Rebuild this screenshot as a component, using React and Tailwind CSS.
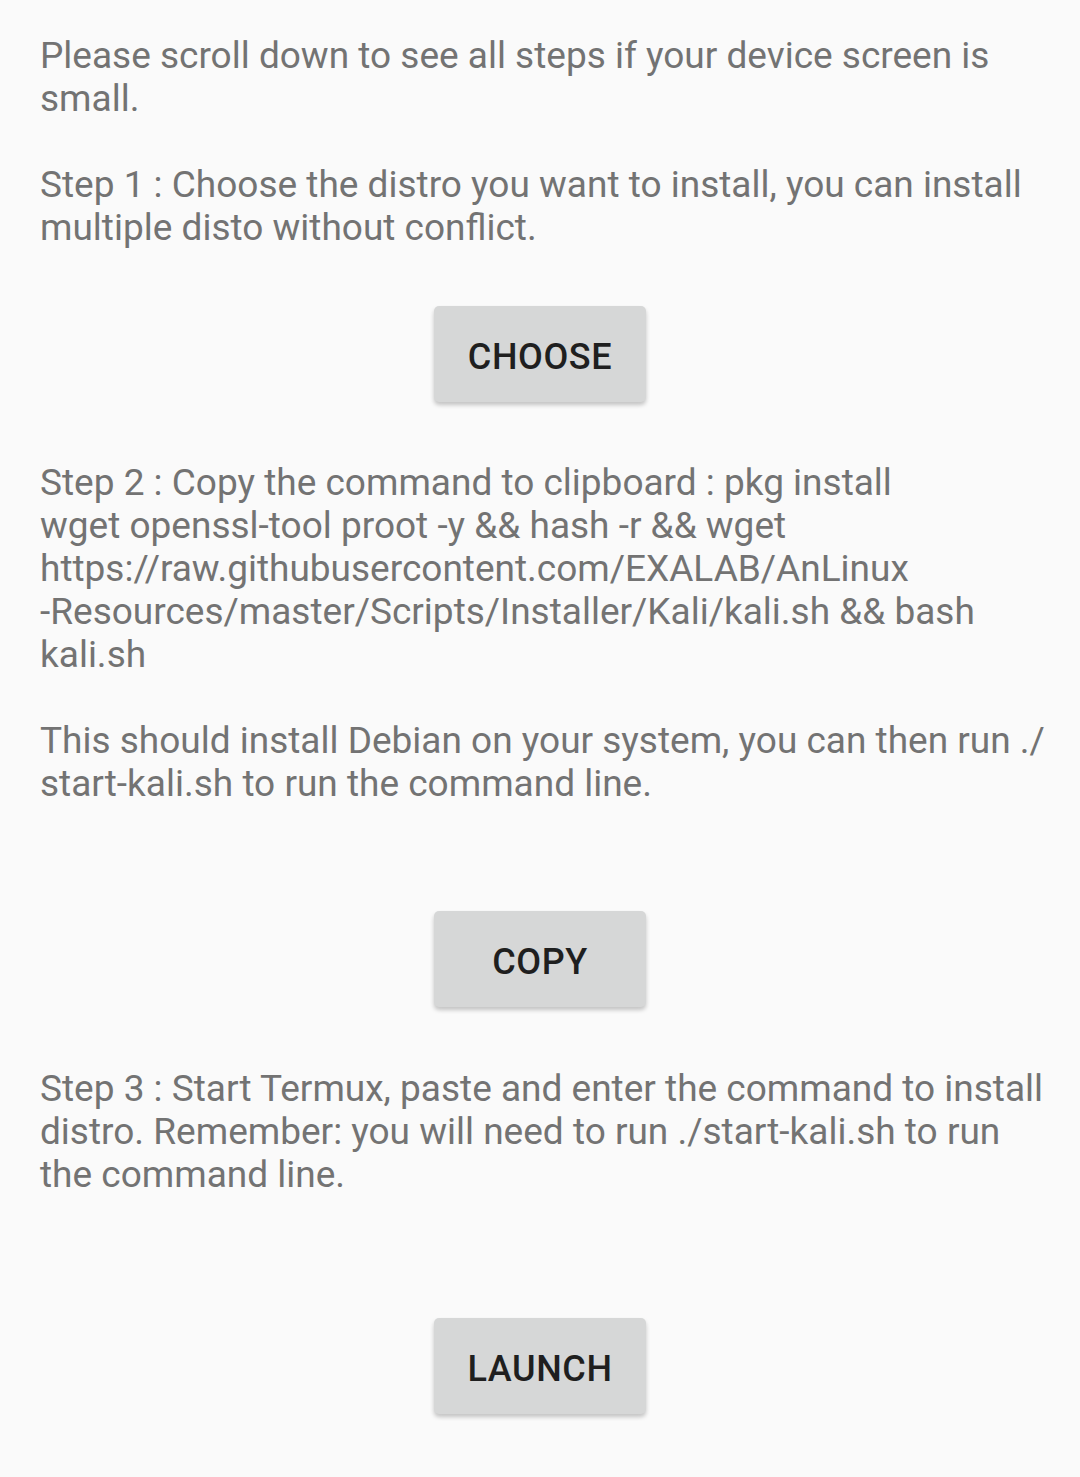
import React from 'react';

const Lines = ({ lines }) => (
    <div className="text-[37px] leading-[43px] text-[#737373] whitespace-nowrap">
        {lines.map((line, i) => (
            <div key={i} className="h-[43px]">
                {line || '\u00a0'}
            </div>
        ))}
    </div>
);

const ActionButton = ({ label }) => (
    <div className="flex justify-center">
        <button
            type="button"
            className="w-[212px] h-[96px] pt-[5px] rounded-[5px] bg-[#d6d7d7] text-[#1f1f1f] text-[36px] font-medium tracking-[0.6px] shadow-[0_3px_4px_rgba(0,0,0,0.22)]"
        >
            {label}
        </button>
    </div>
);

export default function App() {
    return (
        <div className="min-h-[1477px] bg-[#fafafa] px-[40px] pt-[34px] font-['Roboto',sans-serif]">
            <Lines
                lines={[
                    'Please scroll down to see all steps if your device screen is',
                    'small.',
                    '',
                    'Step 1 : Choose the distro you want to install, you can install',
                    'multiple disto without conflict.',
                ]}
            />
            <div className="mt-[57px]">
                <ActionButton label="CHOOSE" />
            </div>
            <div className="mt-[59px]">
                <Lines
                    lines={[
                        'Step 2 : Copy the command to clipboard : pkg install',
                        'wget openssl-tool proot -y && hash -r && wget',
                        'https://raw.githubusercontent.com/EXALAB/AnLinux',
                        '-Resources/master/Scripts/Installer/Kali/kali.sh && bash',
                        'kali.sh',
                        '',
                        'This should install Debian on your system, you can then run ./',
                        'start-kali.sh to run the command line.',
                    ]}
                />
            </div>
            <div className="mt-[106px]">
                <ActionButton label="COPY" />
            </div>
            <div className="mt-[60px]">
                <Lines
                    lines={[
                        'Step 3 : Start Termux, paste and enter the command to install',
                        'distro. Remember: you will need to run ./start-kali.sh to run',
                        'the command line.',
                    ]}
                />
            </div>
            <div className="mt-[122px]">
                <ActionButton label="LAUNCH" />
            </div>
        </div>
    );
}
